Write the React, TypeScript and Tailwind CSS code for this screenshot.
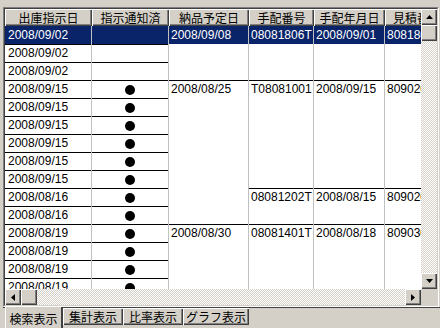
import React from 'react';

const RAISED =
  'bg-[#d4d0c8] shadow-[inset_1px_1px_0_#ffffff,inset_-1px_-1px_0_#404040,inset_-2px_-2px_0_#808080]';
const TRACK =
  'bg-[repeating-conic-gradient(#d4d0c8_0_25%,#ffffff_0_50%)] bg-[length:2px_2px]';

const dates = [
  '2008/09/02', '2008/09/02', '2008/09/02',
  '2008/09/15', '2008/09/15', '2008/09/15', '2008/09/15', '2008/09/15', '2008/09/15',
  '2008/08/16', '2008/08/16',
  '2008/08/19', '2008/08/19', '2008/08/19', '2008/08/19',
];

const headers = [
  { label: '出庫指示日', w: 'w-[87px]' },
  { label: '指示通知済', w: 'w-[77px]' },
  { label: '納品予定日', w: 'w-[80px]' },
  { label: '手配番号', w: 'w-[65px]' },
  { label: '手配年月日', w: 'w-[71px]' },
  { label: '見積番号', w: 'w-[64px]' },
];

const deliveryGroups = [
  { rows: 3, text: '2008/09/08' },
  { rows: 8, text: '2008/08/25' },
  { rows: 4, text: '2008/08/30' },
];

const orderGroups = [
  { rows: 3, no: '08081806T', date: '2008/09/01', est: '80818006' },
  { rows: 6, no: 'T08081001', date: '2008/09/15', est: '80902001' },
  { rows: 2, no: '08081202T', date: '2008/08/15', est: '80902002' },
  { rows: 4, no: '08081401T', date: '2008/08/18', est: '80903001' },
];

function Arrow({ dir }: { dir: 'up' | 'down' | 'left' | 'right' }) {
  const pts = {
    up: '3.5,0 7,4 0,4',
    down: '0,0 7,0 3.5,4',
    left: '4,0 4,7 0,3.5',
    right: '0,0 4,3.5 0,7',
  }[dir];
  const vertical = dir === 'up' || dir === 'down';
  return (
    <svg width={vertical ? 7 : 4} height={vertical ? 4 : 7} viewBox={vertical ? '0 0 7 4' : '0 0 4 7'}>
      <polygon points={pts} fill="#000" />
    </svg>
  );
}

function MergedColumn({ w, groups, pick }: { w: string; groups: { rows: number }[]; pick: (i: number) => string }) {
  return (
    <div className={`${w} shrink-0 h-full overflow-hidden border-r border-[#c0c0c0] flex flex-col`}>
      {groups.map((g, i) => (
        <div
          key={i}
          className={`shrink-0 ${i === 0 ? '' : 'border-t border-black'}`}
          style={{ height: g.rows * 18 }}
        >
          {i === 0 ? (
            <div className="h-[18px] bg-[#0a246a] text-white pl-[2px] leading-[18px] whitespace-nowrap">{pick(i)}</div>
          ) : (
            <div className="h-[17px] pl-[2px] leading-[17px] whitespace-nowrap">{pick(i)}</div>
          )}
        </div>
      ))}
    </div>
  );
}

export default function App() {
  return (
    <div className="w-[440px] h-[328px] bg-[#d4d0c8] pt-[7px] pl-[3px] overflow-hidden font-['Liberation_Sans','Noto_Sans_CJK_JP',sans-serif] text-[12px] text-black">
      {/* grid frame */}
      <div className="w-[436px] h-[300px] border border-t-[#808080] border-l-[#808080] border-r-white border-b-white">
        <div className="w-full h-full border border-t-[#404040] border-l-[#404040] border-r-[#d4d0c8] border-b-[#d4d0c8] flex flex-col">
          <div className="flex h-[280px]">
            {/* viewport */}
            <div className="w-[416px] h-full overflow-hidden flex flex-col bg-white">
              <div className="flex h-[17px] shrink-0 bg-[#d4d0c8]">
                {headers.map((h) => (
                  <div
                    key={h.label}
                    className={`${h.w} shrink-0 ${RAISED} text-center leading-[17px] font-['Noto_Sans_CJK_JP',sans-serif] whitespace-nowrap overflow-hidden`}
                  >
                    {h.label}
                  </div>
                ))}
              </div>
              <div className="flex flex-1 overflow-hidden">
                <div className="w-[87px] shrink-0 border-r border-[#c0c0c0] flex flex-col">
                  {dates.map((d, i) => (
                    <div
                      key={i}
                      className={`h-[18px] shrink-0 pl-[3px] ${i === 0 ? 'bg-[#0a246a] text-white leading-[18px]' : 'border-t border-black leading-[17px]'}`}
                    >
                      {d}
                    </div>
                  ))}
                </div>
                <div className="w-[77px] shrink-0 border-r border-[#c0c0c0] flex flex-col">
                  {dates.map((_, i) => (
                    <div
                      key={i}
                      className={`h-[18px] shrink-0 flex items-center justify-center ${i === 0 ? 'bg-[#0a246a]' : 'border-t border-black'}`}
                    >
                      {i >= 3 && <span className="w-[10px] h-[10px] rounded-full bg-black" />}
                    </div>
                  ))}
                </div>
                <MergedColumn w="w-[80px]" groups={deliveryGroups} pick={(i) => deliveryGroups[i].text} />
                <MergedColumn w="w-[65px]" groups={orderGroups} pick={(i) => orderGroups[i].no} />
                <MergedColumn w="w-[71px]" groups={orderGroups} pick={(i) => orderGroups[i].date} />
                <MergedColumn w="w-[64px]" groups={orderGroups} pick={(i) => orderGroups[i].est} />
              </div>
            </div>
            {/* vertical scrollbar */}
            <div className={`w-[16px] h-full flex flex-col ${TRACK}`}>
              <div className={`h-[16px] shrink-0 ${RAISED} flex items-center justify-center`}>
                <Arrow dir="up" />
              </div>
              <div className={`h-[16px] shrink-0 ${RAISED}`} />
              <div className="flex-1" />
              <div className={`h-[16px] shrink-0 ${RAISED} flex items-center justify-center`}>
                <Arrow dir="down" />
              </div>
            </div>
          </div>
          {/* horizontal scrollbar */}
          <div className="flex h-[16px]">
            <div className={`w-[416px] flex ${TRACK}`}>
              <div className={`w-[16px] shrink-0 ${RAISED} flex items-center justify-center`}>
                <Arrow dir="left" />
              </div>
              <div className={`w-[16px] shrink-0 ${RAISED}`} />
              <div className="flex-1" />
              <div className={`w-[16px] shrink-0 ${RAISED} flex items-center justify-center`}>
                <Arrow dir="right" />
              </div>
            </div>
            <div className="w-[16px] bg-[#d4d0c8]" />
          </div>
        </div>
      </div>
      {/* sheet tabs */}
      <div className="flex h-[21px] pl-[2px] font-['Noto_Sans_CJK_JP',sans-serif] border-t border-[#404040] w-[437px]">
        <div className="w-[58px] h-[21px] -mt-px bg-[#d4d0c8] border-l border-white border-r-2 border-r-[#404040] text-center leading-[24px]">
          検索表示
        </div>
        {['集計表示', '比率表示', 'グラフ表示'].map((t) => (
          <div
            key={t}
            className={`${t === 'グラフ表示' ? 'w-[66px]' : 'w-[60px]'} h-[17px] ${RAISED} text-center leading-[17px] whitespace-nowrap`}
          >
            {t}
          </div>
        ))}
      </div>
    </div>
  );
}
